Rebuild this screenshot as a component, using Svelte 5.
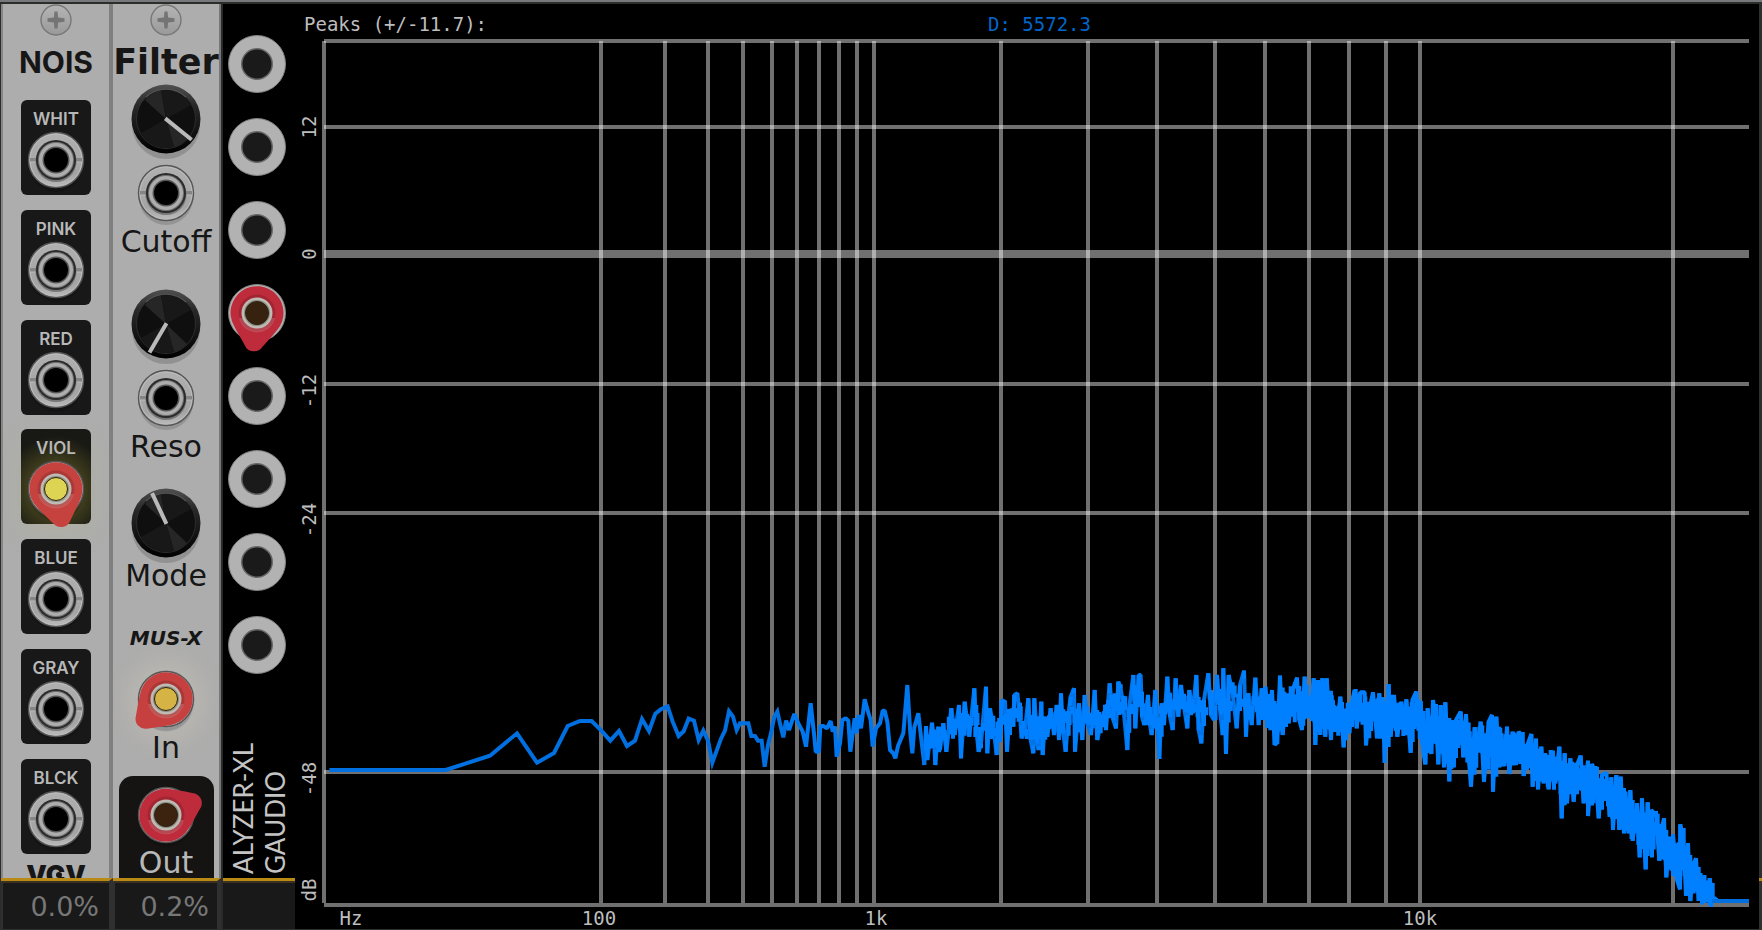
<script>
  const noises = ['WHIT', 'PINK', 'RED', 'VIOL', 'BLUE', 'GRAY', 'BLCK'];
  let cutoff = 129;
  let reso = 210;
  let mode = -25;

  // chart space: the plot's own units, same numbers as the viewBox
  const box = { x: 322, y: 39, w: 1428, h: 868 };
  const columns = [
    324, 601, 665, 708, 743, 772, 797, 819, 839, 857, 874, 1001, 1088, 1157,
    1215, 1265, 1309, 1349, 1386, 1420, 1673
  ];
  const rows = [41, 127, 384, 513, 772, 905];
  const yLabels = [
    { text: '12', at: 127 },
    { text: '0', at: 254 },
    { text: '-12', at: 391 },
    { text: '-24', at: 520 },
    { text: '-48', at: 779 },
    { text: 'dB', at: 890 }
  ];
  const xLabels = [
    { text: 'Hz', at: 351 },
    { text: '100', at: 599 },
    { text: '1k', at: 876 },
    { text: '10k', at: 1420 }
  ];

  // spectrum bins, three steps to a chart unit
  const low =
    '118,360 467,360 600,317 681,250 741,338 792,309 833,228 870,213 905,213 934,242 961,272 987,243 1011,288 1035,272 1056,207 1077,243 1096,191 1114,177 1133,169 1148,215 1166,258 1181,244 1196,206 1212,212 1226,270 1240,242 1254,272 1267,338 1280,302 1293,266 1305,242 1317,184 1329,200 1340,240 1350,220 1375,220 1384,258 1395,258 1404,272 1415,272 1424,350 1434,285 1443,250 1453,200 1462,185 1471,225 1480,262 1488,212 1497,240';
  const mid =
    '18,242 27,270 43,222 55,250 68,275 78,320 92,190 104,300 107,335 117,335 121,258 130,258 141,265 152,243 158,275 165,260 170,350 180,310 187,240 197,235 205,242 211,335 224,235 230,280 236,225 243,265 254,178 264,215 272,240 278,320 288,265 300,250 308,212 314,212 322,245 330,330 340,340 346,355 354,318 370,280 382,135 391,280 397,340 403,262 415,220 423,290 433,375';
  const dense =
    '433,375 438,258 442,360 456,248 462,300 466,375 475,260 480,330 490,250 499,335 514,205 524,285 537,195 543,355 554,185 568,290 583,145 589,270 596,335 603,310 618,140 622,340 630,205 640,260 650,345 655,245 660,305 665,180 675,185 681,335 690,210 700,260 703,165 712,160 720,230 725,295 735,270 745,175 752,300 760,340 763,175 772,310 776,330 784,185 788,345 796,230 802,290 812,205 822,285 830,195 837,300 843,160 850,280 857,335 866,215 872,170 882,145 885,335 897,190 907,300 914,165 922,250 933,285 944,150 952,300 962,250 972,215 978,270 985,180 989,130 1000,240 1008,265 1015,125 1022,145 1030,200 1042,330 1048,200 1060,105 1066,265 1076,105 1082,105 1086,230 1093,255 1104,165 1110,255 1115,285 1126,150 1138,357 1145,190 1152,255 1162,110 1170,230 1178,270 1187,115 1195,230 1203,135 1212,200 1222,265 1228,150 1238,220 1249,105 1256,270 1264,310 1272,180 1285,100 1293,225 1302,240 1311,105 1320,210 1328,285 1330,85 1338,342 1346,105 1358,160 1370,265 1380,135 1392,92 1398,290 1405,160 1415,255 1426,113 1436,255 1445,145 1456,240';
  const high =
    '0,240 10,140 20,248 30,150 38,315 46,305 54,107 62,285 72,165 80,250 92,150 105,113 112,240 120,270 128,110 135,230 145,225 155,115 160,315 168,120 175,285 181,115 190,290 194,115 207,300 212,180 222,275 235,170 240,250 245,322 252,215 262,280 270,185 278,150 284,265 295,157 308,157 312,316 322,210 333,157 345,295 352,160 358,262 363,172 368,368 380,133 386,290 396,165 406,290 418,185 430,285 433,178 446,338 452,178 463,155 470,272 476,183 484,335 490,373 497,205 508,342 513,180 522,240 529,373 536,195 546,382 550,187 562,424 568,240 575,382 582,240 596,215 604,352 612,222 620,350 627,440 638,262 648,335 656,245 666,425 680,245 690,225 693,455 703,230 712,382 718,280 727,378 735,260 742,402 752,275 762,375 770,275 780,290 785,408 795,318 808,282 812,440 822,296 828,448 838,320 845,430 855,345 860,448 872,332 880,430 892,320 899,535 908,340 915,490 925,355 935,485 945,375 956,347 965,490 978,362 978,528 990,372 1000,400 1010,535 1020,405 1033,398 1043,530 1048,412 1053,570 1063,405 1072,570 1076,410 1086,580 1090,455 1100,580 1105,450 1112,602 1125,490 1133,652 1140,475 1151,688 1157,487 1170,652 1168,510 1182,525 1192,662 1198,570 1206,535 1213,712 1222,590 1235,705 1233,583 1245,720 1254,748 1255,553 1265,610 1272,768 1278,610 1285,783 1295,670 1302,655 1310,783 1315,700 1325,783 1330,740 1343,783 1343,715 1352,783 1357,772 1362,783';

  function place(points, ox, oy) {
    return points.split(' ').map((p) => {
      const [x, y] = p.split(',').map(Number);
      return [ox + x / 3, oy + y / 3];
    });
  }

  const lowBins = place(low, 290, 650);
  const midBins = place(mid, 780, 640);
  const denseBins = place(dense, 780, 640);
  const highBins = place(high, 1262, 640);

  // upright strokes that fill the trace where several bins share a pixel
  function bars(bins, share) {
    let d = '';
    for (let i = 1; i < bins.length; i++) {
      const [x, y] = bins[i];
      const from = bins[i - 1][1];
      d += `M${x.toFixed(1)} ${y.toFixed(1)}V${(y + (from - y) * share).toFixed(1)}`;
    }
    return d;
  }

  // moving middle of the trace, stepped like the bins themselves
  function middle(bins, thickness) {
    let d = '';
    for (let i = 2; i < bins.length - 2; i++) {
      const near = bins.slice(i - 2, i + 3).map((b) => b[1]);
      const y = near.reduce((a, b) => a + b) / 5 + ((i * 7) % 5) - 2;
      const half = thickness + ((i * 5) % 4);
      const x = (bins[i - 1][0] + bins[i][0]) / 2;
      d += `M${x.toFixed(1)} ${(y - half).toFixed(1)}V${(y + half).toFixed(1)}`;
    }
    return d;
  }

  const left = (at) => ((at - box.x) / box.w) * 100;
  const top = (at) => ((at - box.y) / box.h) * 100;
</script>

{#snippet screw()}
  <svg class="screw" viewBox="0 0 32 32" width="32" height="32" aria-hidden="true">
    <circle cx="16" cy="16" r="15" fill="url(#screwFill)" stroke="#777" stroke-width="1.4" />
    <path
      d="M14.500 7.500h3l.6 5.900 6.400.9v3.400l-6.400.9-.6 5.900h-3l-.6-5.900-6.400-.9v-3.400l6.400-.9z"
      fill="#747474"
    />
  </svg>
{/snippet}

{#snippet plug(angle, shell, light)}
  <g transform="translate(29 29)">
    <path
      transform="rotate({angle})"
      d="M-22 14.500A26.500 26.500 0 1 1 22 14.500Q20 18 9 33Q6 38.500 0 38.500Q-6 38.500-9 33Q-20 18-22 14.500Z"
      fill={shell}
    />
    <circle r="18.500" fill="#000" opacity=".14" />
    <path d="M-18 5A18.500 18.500 0 0 0 18 5Z" fill="#fff" opacity=".16" />
    <circle r="15.500" fill="#bdbbb4" />
    <circle r="13" fill="#8d8a82" />
    <circle r="11.500" fill={light} stroke="#2a2410" stroke-width="1" />
  </g>
{/snippet}

{#snippet jack(name, angle, shell, light)}
  <button class="jack" aria-label={name}>
    <svg viewBox="0 0 58 62" width="58" height="62" aria-hidden="true">
      <ellipse cx="29" cy="34" rx="27" ry="27" fill="#000" opacity=".14" />
      <circle cx="29" cy="29" r="27.500" fill="url(#metal)" stroke="#555" stroke-width="1.4" />
      <circle cx="29" cy="29" r="26" fill="none" stroke="#bcbcbc" stroke-width="1" />
      <path d="M3 29h8M47 29h8" stroke="#858585" stroke-width="4" />
      <path d="M3 31h8M47 31h8" stroke="#bbb" stroke-width="1" />
      <circle cx="29" cy="30.500" r="20.500" fill="#777" />
      <circle cx="29" cy="29" r="20" fill="#2b2b2b" />
      <circle cx="29" cy="29" r="18" fill="#777" />
      <circle cx="29" cy="29" r="17" fill="#adadad" />
      <circle cx="29" cy="29" r="13.500" fill="#555" />
      <circle cx="29" cy="29" r="12" fill="#000" />
      {#if light}{@render plug(angle, shell, light)}{/if}
    </svg>
  </button>
{/snippet}

{#snippet ring(name, plugged)}
  <button class="ring" aria-label={name}>
    <svg viewBox="0 0 58 58" width="58" height="58" aria-hidden="true">
      <circle cx="29" cy="29" r="28.500" fill="#b2b2b2" stroke="#808080" stroke-width="1" />
      <circle cx="29" cy="29" r="16" fill="#666" />
      <circle cx="29" cy="29" r="14.500" fill="#1a1a1a" />
      {#if plugged}{@render plug(6, '#be2c3b', '#37220f')}{/if}
    </svg>
  </button>
{/snippet}

{#snippet dial(angle)}
  <svg viewBox="0 0 70 72" width="70" height="72" aria-hidden="true">
    <circle cx="35" cy="41" r="34" fill="#000" opacity=".16" />
    <circle cx="35" cy="35" r="34.500" fill="url(#rim)" />
    <circle cx="35" cy="35" r="29.500" fill="#0f0f0f" stroke="#2c2c2c" stroke-width="1" />
    <path d="M35 35 14 16A29 29 0 0 1 30 6.500ZM35 35 43 63A29 29 0 0 0 56 55Z" fill="#262626" />
    <path d="M35 35 30 6.500A29 29 0 0 1 60 21ZM35 35 10 49A29 29 0 0 0 43 63Z" fill="#181818" />
    <path d="M15 13A29.500 29.500 0 0 1 55 13" fill="none" stroke="#505050" stroke-width="1.300" />
    <path d="M35 36V2" transform="rotate({angle} 35 35)" stroke="#bababa" stroke-width="4" />
  </svg>
{/snippet}

<div class="rack">
  <svg class="defs" width="0" height="0" aria-hidden="true">
    <defs>
      <linearGradient id="screwFill" x2="0" y2="1">
        <stop offset="0" stop-color="#b5b5b5" />
        <stop offset="1" stop-color="#999" />
      </linearGradient>
      <linearGradient id="metal" x2="0" y2="1">
        <stop offset="0" stop-color="#b0b0b0" />
        <stop offset=".75" stop-color="#a4a4a4" />
        <stop offset="1" stop-color="#bbb" />
      </linearGradient>
      <linearGradient id="rim" x2="0" y2="1">
        <stop offset="0" stop-color="#505050" />
        <stop offset=".3" stop-color="#292929" />
        <stop offset="1" stop-color="#000" />
      </linearGradient>
    </defs>
  </svg>

  <section class="module nois">
    <div class="panel">
      {@render screw()}
      <h2>NOIS</h2>
      <div class="outputs">
        {#each noises as name}
          <div class="output" class:lit={name === 'VIOL'}>
            <span>{name}</span>
            {#if name === 'VIOL'}
              {@render jack(name, -10, '#c6423f', '#dcd452')}
            {:else}
              {@render jack(name)}
            {/if}
          </div>
        {/each}
      </div>
      <div class="logo">VCV</div>
    </div>
    <div class="meter">0.0%</div>
  </section>

  <section class="module filter">
    <div class="panel">
      {@render screw()}
      <h2>Filter</h2>
      <label class="knob">
        {@render dial(cutoff)}
        <input type="range" min="-150" max="150" bind:value={cutoff} aria-label="Cutoff" />
      </label>
      {@render jack('Cutoff CV')}
      <p>Cutoff</p>
      <label class="knob second">
        {@render dial(reso)}
        <input type="range" min="-150" max="210" bind:value={reso} aria-label="Reso" />
      </label>
      {@render jack('Reso CV')}
      <p>Reso</p>
      <label class="knob third">
        {@render dial(mode)}
        <input type="range" min="-150" max="150" bind:value={mode} aria-label="Mode" />
      </label>
      <p>Mode</p>
      <div class="brand">MUS-X</div>
      <div class="in">{@render jack('In', 46, '#c6403f', '#d6b345')}</div>
      <p>In</p>
      <div class="out">
        {@render jack('Out', -115, '#be2c3b', '#3b2310')}
        <p>Out</p>
      </div>
    </div>
    <div class="meter">0.2%</div>
  </section>

  <section class="module analyzer">
    <div class="side">
      <div class="rings">
        {#each [1, 2, 3, 4, 5, 6, 7, 8] as n}
          {@render ring(`Input ${n}`, n === 4)}
        {/each}
      </div>
      <div class="names">
        <span>ALYZER-XL</span>
        <span>GAUDIO</span>
      </div>
      <div class="meter"></div>
    </div>

    <div class="display">
      <div class="readout">
        <span>Peaks (+/-11.7):</span>
        <span class="peak">D: 5572.3</span>
      </div>
      <div class="y-axis">
        {#each yLabels as label}
          <span style="top: {top(label.at)}%">{label.text}</span>
        {/each}
      </div>
      <div class="plot">
        <svg viewBox="{box.x} {box.y} {box.w} {box.h}" preserveAspectRatio="none">
          <g stroke="#fff" stroke-opacity=".44" stroke-width="4">
            {#each columns as x}
              <line x1={x} x2={x} y1="41" y2="903" />
            {/each}
            {#each rows as y}
              <line x1="324" x2="1749" y1={y} y2={y} />
            {/each}
            <line x1="324" x2="1749" y1="254" y2="254" stroke-width="8" />
          </g>
          <g fill="none" stroke="#0080ff" stroke-width="4">
            <polyline points={lowBins.join(' ')} stroke="#006fdf" />
            <polyline points={midBins.join(' ')} stroke="#0077ee" stroke-linejoin="bevel" />
            <polyline points={denseBins.join(' ')} stroke="#0074e8" stroke-linejoin="bevel" />
            <path d={bars(denseBins, 0.6)} />
            <path d={middle(denseBins, 4)} />
            <polyline points={highBins.join(' ')} stroke-linejoin="bevel" />
            <path d={bars(highBins, 0.8)} />
            <path d={middle(highBins, 11)} />
            <line x1="1712" x2="1749" y1="901" y2="901" stroke="#006fdf" />
          </g>
        </svg>
      </div>
      <div class="x-axis">
        {#each xLabels as label}
          <span style="left: {left(label.at)}%">{label.text}</span>
        {/each}
      </div>
    </div>
  </section>
  <div class="edge"><div class="meter"></div></div>
</div>

<style>
  :global(body) {
    margin: 0;
    background: #222;
  }

  .rack {
    box-sizing: border-box;
    display: flex;
    min-height: 100vh;
    padding-left: 1px;
    border-top: 2px solid #77787c;
    border-bottom: 1px solid #303030;
    font-family: 'DejaVu Sans', sans-serif;
    color: #161616;
    background: #2b2d2b;
  }

  .defs {
    position: absolute;
  }

  .module {
    display: flex;
    flex-direction: column;
    padding-top: 2px;
  }

  .panel {
    box-sizing: border-box;
    flex: 1;
    display: flex;
    flex-direction: column;
    align-items: center;
    background: #adadad;
  }

  .nois .panel {
    width: 112px;
    border-left: 2px solid #868686;
    border-right: 4px solid #808080;
  }

  .filter .panel {
    width: 108px;
    border-right: 2px solid #777;
  }

  .screw,
  .jack svg,
  .ring svg,
  .knob svg {
    display: block;
    overflow: visible;
  }

  h2 {
    margin: 6px 0 0;
    font-size: 35px;
    line-height: 40px;
    font-weight: bold;
  }

  .nois h2 {
    font-family: Inter, sans-serif;
    font-size: 30px;
  }

  p {
    margin: 0;
    font-size: 30px;
    line-height: 32px;
  }

  button {
    display: block;
    padding: 0;
    border: none;
    background: none;
    cursor: pointer;
  }

  .outputs {
    flex: 1;
    display: flex;
    flex-direction: column;
    justify-content: space-between;
    margin: 18px 0 10px;
  }

  .output {
    box-sizing: border-box;
    display: flex;
    flex-direction: column;
    align-items: center;
    width: 70px;
    height: 95px;
    padding-top: 9px;
    border-radius: 6px;
    background: #181818;
    color: #b8b8b8;
    font: 600 17px Inter, sans-serif;
  }

  .output span {
    line-height: 20px;
    margin-bottom: 2px;
  }

  .lit {
    background: radial-gradient(circle at 50% 64%, #4c4a22 20px, #302f19 38px, #181815 54px);
    box-shadow: 0 10px 24px rgba(200, 200, 110, 0.14);
  }

  .logo {
    position: relative;
    height: 14px;
    overflow: hidden;
    font: 900 26px/22px Inter, sans-serif;
  }

  .logo::after {
    content: '';
    position: absolute;
    top: 8px;
    left: 50%;
    width: 6px;
    height: 6px;
    border-radius: 50%;
    background: #161616;
  }

  .knob {
    position: relative;
    margin: 2px 0 8px;
  }

  .knob.second {
    margin-top: 31px;
  }

  .knob.third {
    margin: 25px 0 0;
  }

  .knob input {
    position: absolute;
    inset: 0;
    width: 100%;
    height: 100%;
    margin: 0;
    opacity: 0;
    cursor: pointer;
  }

  .brand {
    margin: 34px 0 20px;
    font-size: 20px;
    line-height: 24px;
    font-weight: bold;
    font-style: italic;
  }

  .in {
    border-radius: 50%;
    box-shadow: 0 0 28px 6px rgba(230, 220, 190, 0.3);
  }

  .out {
    display: flex;
    flex-direction: column;
    align-items: center;
    width: 95px;
    margin-top: 12px;
    padding-top: 10px;
    border-radius: 14px 14px 0 0;
    background: #151413;
    color: #b8b8b8;
  }

  .out p {
    line-height: 30px;
  }

  .meter {
    box-sizing: border-box;
    height: 51px;
    padding-right: 10px;
    border-top: 3px solid #b98a14;
    border-right: 4px solid #303030;
    background: #191919;
    box-shadow: inset 0 2px #3c3120, inset 2px 0 #303030;
    color: #777;
    font-size: 27px;
    line-height: 52px;
    text-align: right;
  }

  .filter .meter {
    padding-right: 8px;
  }

  .analyzer {
    flex: 1;
    flex-direction: row;
    min-width: 0;
    border-left: 2px solid #2a2a2a;
  }

  .side {
    display: flex;
    flex-direction: column;
    width: 72px;
    background: #000;
  }

  .side .meter {
    border-right: none;
    box-shadow: inset 0 2px #3c3120;
  }

  .rings {
    display: flex;
    flex-direction: column;
    gap: 25px;
    padding: 31px 0 0 5px;
  }

  .names {
    flex: 1;
    display: flex;
    align-items: flex-end;
    padding: 0 0 4px 4px;
    color: #c4c4c4;
    font: 400 26px/32px Lato, sans-serif;
  }

  .names span {
    writing-mode: vertical-rl;
    transform: rotate(180deg);
  }

  .display {
    flex: 1;
    display: grid;
    grid-template-columns: 27px 1fr;
    grid-template-rows: 35px 1fr 22px;
    padding-right: 9px;
    background: #000;
    color: #bdbdbd;
    font: 19px/22px 'DejaVu Sans Mono', monospace;
  }

  .readout {
    grid-column: 1 / 3;
    display: grid;
    grid-template-columns: 684fr 762fr;
    padding: 9px 0 0 9px;
  }

  .peak {
    color: #0066cc;
  }

  .y-axis,
  .plot,
  .x-axis {
    position: relative;
  }

  .y-axis span {
    position: absolute;
    left: 3px;
    writing-mode: vertical-rl;
    transform: translateY(-50%) rotate(180deg);
  }

  .plot svg {
    position: absolute;
    width: 100%;
    height: 100%;
  }

  .x-axis {
    grid-column: 2;
  }

  .x-axis span {
    position: absolute;
    transform: translateX(-50%);
  }

  .edge {
    display: flex;
    flex-direction: column;
    justify-content: flex-end;
    width: 3px;
    background: #2e2e2e;
  }

  .edge .meter {
    padding: 0;
    border-right: none;
    background: #303030;
  }
</style>
